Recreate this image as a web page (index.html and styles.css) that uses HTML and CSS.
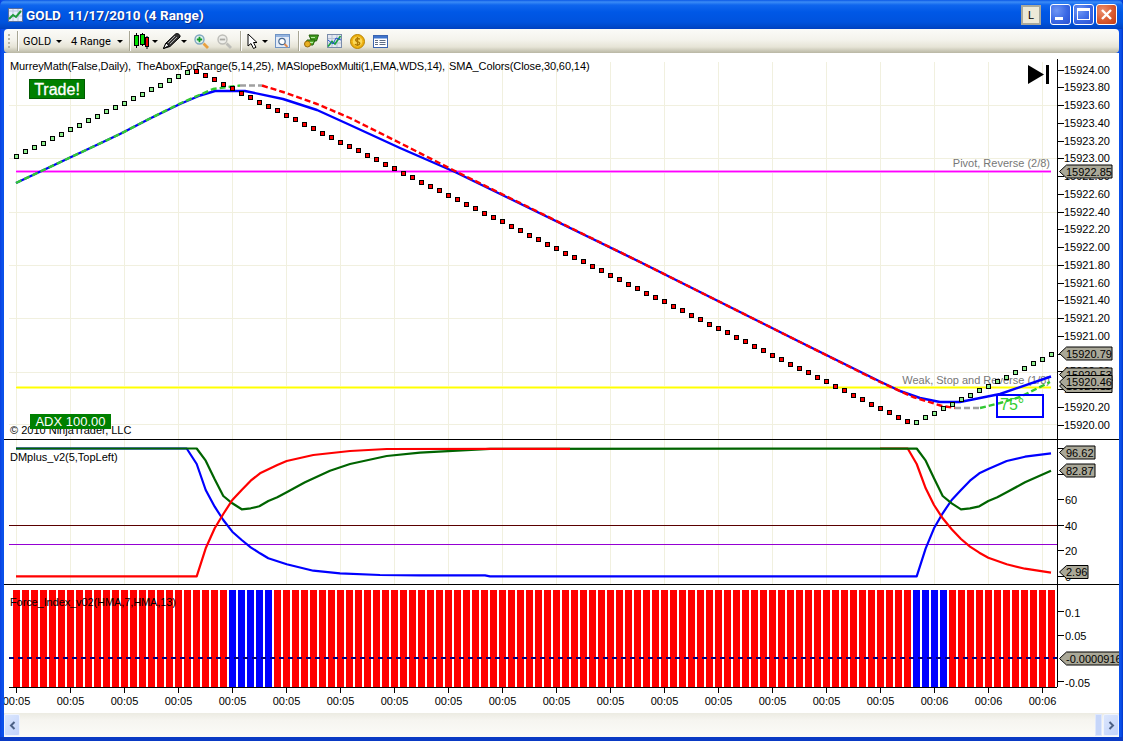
FILE: index.html
```html
<!DOCTYPE html>
<html lang="en">
<head>
<meta charset="utf-8">
<title>GOLD 11/17/2010 (4 Range)</title>
<link rel="stylesheet" href="styles.css">
</head>
<body>
<div class="window">
  <header class="titlebar">
    <svg class="app-icon" width="15" height="14" viewBox="0 0 15 14"><rect x=".5" y=".5" width="14" height="13" fill="#e8eefc" stroke="#5a6f9c"/><path d="M1 3h13M5 1v12M10 1v12M1 8h13" stroke="#b8c4dc"/><path d="M1 11l4-4 3 2 5-6" fill="none" stroke="#1f9a3c" stroke-width="2"/></svg>
    <span class="title">GOLD&nbsp; 11/17/2010 (4 Range)</span>
    <button class="lock">L</button>
    <div class="caption-buttons">
      <span class="cap cap-blue"><i class="glyph-min"></i></span>
      <span class="cap cap-blue"><i class="glyph-max"></i></span>
      <span class="cap cap-red"><svg width="13" height="13" viewBox="0 0 13 13"><path d="M2 2l9 9M11 2l-9 9" stroke="#fff" stroke-width="2.4"/></svg></span>
    </div>
  </header>
  <nav class="toolbar">
    <span class="grip"></span>
    <span class="sep"></span>
    <span class="tool-text t-gold">GOLD</span><i class="caret c-gold"></i>
    <span class="tool-text t-range">4 Range</span><i class="caret c-range"></i>
    <span class="sep s-a"></span>
    <svg class="ico i-candle" width="15" height="16" viewBox="0 0 15 16"><path d="M2.500 0v15M8.500 0v13M13 3v13" stroke="#000"/><rect x=".5" y="2.500" width="4" height="10" fill="#00e000" stroke="#000"/><rect x="6.500" y="1.500" width="4" height="10" fill="#00e000" stroke="#000"/><rect x="11.500" y="4.500" width="3" height="9" fill="#f00000" stroke="#000"/></svg><i class="caret c-candle"></i>
    <svg class="ico i-pencil" width="18" height="16" viewBox="0 0 18 16"><path d="M.5 15.500L3 10 12.500 1c2-1.200 5 .5 4.500 3L7 13.500z" fill="#333" stroke="#000"/><path d="M5 10l7-7M7 11l7-7" stroke="#aaa"/><path d="M.5 15.500L3 10l3 2.500z" fill="#fff" stroke="#000"/></svg><i class="caret c-pencil"></i>
    <svg class="ico i-zoom1" width="15" height="15" viewBox="0 0 15 15"><circle cx="5.500" cy="5.500" r="4.500" fill="#e4f2f0" stroke="#7fa6c0" stroke-width="1.400"/><path d="M9.500 9.500l4.500 4.500" stroke="#e8a040" stroke-width="2.800"/><path d="M2.800 5.500h5.400M5.500 2.800v5.400" stroke="#139a2a" stroke-width="1.800"/></svg>
    <svg class="ico i-zoom2" width="15" height="15" viewBox="0 0 15 15"><circle cx="5.500" cy="5.500" r="4.500" fill="#eeeeea" stroke="#bdbdb8" stroke-width="1.400"/><path d="M9.500 9.500l4.500 4.500" stroke="#bdbdb8" stroke-width="2.800"/><path d="M2.800 5.500h5.400" stroke="#a8a8a4" stroke-width="1.800"/></svg>
    <span class="sep s-b"></span>
    <svg class="ico i-cursor" width="11" height="16" viewBox="0 0 11 16"><path d="M1 1v12l3-2.500 2.500 5 2.500-1.200L6.500 9.500H10z" fill="#fff" stroke="#000"/></svg><i class="caret c-cursor"></i>
    <svg class="ico i-prop" width="15" height="14" viewBox="0 0 15 14"><rect x=".5" y=".5" width="14" height="13" fill="#e4ecf8" stroke="#6f93c4"/><rect x="1" y="1" width="13" height="2" fill="#94b4e0"/><circle cx="7" cy="7.500" r="3.200" fill="#fff" stroke="#4a6a92" stroke-width="1.200"/><path d="M9.500 10l3 3" stroke="#e08a50" stroke-width="2"/></svg>
    <span class="sep s-c"></span>
    <svg class="ico i-a" width="15" height="14" viewBox="0 0 15 14"><path d="M5 1h9.500l-2 6H7.500z" fill="#3f9a1e" stroke="#24600c"/><path d="M3 6h8l-2 5H2z" fill="#58b02e" stroke="#24600c"/><circle cx="3.500" cy="10" r="3" fill="#e8b020" stroke="#96680a"/><path d="M7 3.500h4M6 8.500h3" stroke="#b8e8a0"/></svg>
    <svg class="ico i-b" width="15" height="14" viewBox="0 0 15 14"><rect x=".5" y=".5" width="14" height="13" fill="#e4e8f0" stroke="#7a8cab"/><path d="M1 4.500h13M1 9h13M5 1v12M10 1v12" stroke="#b8c2d4"/><path d="M1 12.500l4-5 3 2.500 5.500-8" fill="none" stroke="#18a040" stroke-width="1.600"/><path d="M1 6l5 4 3-6 5 2" fill="none" stroke="#2050d0"/></svg>
    <svg class="ico i-c" width="15" height="15" viewBox="0 0 15 15"><circle cx="7.500" cy="7.500" r="7" fill="#eeb010" stroke="#b88400"/><circle cx="7.500" cy="7.500" r="4.800" fill="#fbd858"/><path d="M10 5.200C8 3.800 5 4.600 5.800 6.500s4.400 1 4 3-3 2.200-5 .8M7.500 3v9" fill="none" stroke="#b07a00" stroke-width="1.400"/></svg>
    <svg class="ico i-d" width="15" height="13" viewBox="0 0 15 13"><rect x=".5" y=".5" width="14" height="12" fill="#fff" stroke="#3a64b0"/><rect x="1" y="1" width="13" height="2.500" fill="#3f74cc"/><path d="M2 5.500h3M2 7.500h3M2 9.500h3M6.500 5.500h6M6.500 7.500h6M6.500 9.500h6" stroke="#5e6e86"/></svg>
  </nav>
  <main class="chart">
    <svg id="plot" class="plot" width="1115" height="660" viewBox="4 53 1115 660" xmlns="http://www.w3.org/2000/svg"></svg>
    <div class="chart-badge trade">Trade!</div>
    <div class="chart-badge adx">ADX 100.00</div>
  </main>
  <footer class="scrollbar">
    <span class="scroll-btn"><svg width="7" height="9" viewBox="0 0 7 9"><path d="M5.500 1L2 4.500 5.500 8" fill="none" stroke="#4d6185" stroke-width="2"/></svg></span>
    <span class="scroll-track"></span>
    <span class="scroll-thumb"></span>
    <span class="scroll-btn"><svg width="7" height="9" viewBox="0 0 7 9"><path d="M1.500 1L5 4.500 1.500 8" fill="none" stroke="#4d6185" stroke-width="2"/></svg></span>
  </footer>
</div>
<script src="script.js"></script>
</body>
</html>
```
FILE: styles.css
```css
* { box-sizing: border-box; }
html, body { margin: 0; padding: 0; background: #fff; }
body { font-family: "Liberation Sans", Arial, sans-serif; font-size: 11px; overflow: hidden; }
.window {
  width: 1123px; height: 741px; display: flex; flex-direction: column;
  padding: 0 4px 4px;
  background: linear-gradient(90deg, #0a3fe0 0, #0a50ea 2px, #0a50ea 1121px, #0035c8 100%);
  box-shadow: inset 0 -4px 0 #0a3ac4;
}
.titlebar {
  height: 29px; margin: 0 -4px; padding: 1px 6px 0 8px; display: flex; align-items: center; flex: none;
  background: linear-gradient(180deg, #0a58e6 0, #3b8cf6 2px, #0f66ee 5px, #0058e6 12px, #0053de 22px, #0048c8 27px, #0040c0 100%);
  border-radius: 6px 6px 0 0;
}
.app-icon { flex: none; }
.title { margin-left: 3px; color: #fff; font-family: Roboto, "Liberation Sans", sans-serif; font-size: 13.5px; font-weight: 700; letter-spacing: .08px; text-shadow: 1px 1px 0 #0a2f90; white-space: pre; flex: 1; }
.lock {
  width: 20px; height: 20px; padding: 0; margin-right: 9px; background: #ece9d8; border: 2px solid #a9a99c;
  font: 11px "Liberation Sans", Arial, sans-serif; color: #000;
}
.caption-buttons { display: flex; gap: 2px; margin-top: -2px; }
.cap { width: 21px; height: 21px; border: 1px solid #fff; border-radius: 3px; display: flex; align-items: center; justify-content: center; }
.cap-blue { background: radial-gradient(circle at 30% 30%, #6f96f4 0, #3a68e4 55%, #2a50d0 100%); }
.cap-red { background: radial-gradient(circle at 30% 30%, #ec9070 0, #d85a30 55%, #c23a12 100%); }
.glyph-min { width: 8px; height: 3px; background: #fff; margin-top: 9px; margin-right: 4px; }
.glyph-max { width: 13px; height: 12px; border: 1px solid #fff; border-top-width: 3px; }
.toolbar {
  height: 24px; flex: none; display: flex; align-items: center;
  background: linear-gradient(180deg, #fbfbf8 0, #f4f3ec 45%, #e6e4d6 75%, #b9b7a4 100%);
  border-radius: 4px;
  padding-left: 4px;
}
.grip { width: 2px; height: 15px; margin-right: 7px; background: repeating-linear-gradient(180deg, #b6b4a4 0 2px, transparent 2px 4px); }
.sep { width: 1px; height: 20px; background: #a8a694; box-shadow: 1px 0 0 #fff; flex: none; }
.tool-text { color: #000; font-family: Roboto, "Liberation Sans", sans-serif; font-size: 11px; flex: none; white-space: nowrap; }
.t-gold { margin-left: 5px; width: 27px; }
.t-range { margin-left: 9px; width: 40px; }
.caret { width: 0; height: 0; border: 3px solid transparent; border-top: 3px solid #000; border-bottom: 0; flex: none; margin-top: 1px; }
.c-gold { margin-left: 6px; }
.c-range { margin-left: 6px; }
.s-a { margin-left: 6px; }
.ico { flex: none; display: block; }
.i-candle { margin-left: 4px; }
.c-candle { margin-left: 3px; }
.i-pencil { margin-left: 5px; }
.c-pencil { margin-left: 0; }
.i-zoom1 { margin-left: 7px; }
.i-zoom2 { margin-left: 8px; }
.s-b { margin-left: 8px; }
.i-cursor { margin-left: 6px; }
.c-cursor { margin-left: 4px; }
.i-prop { margin-left: 7px; }
.s-c { margin-left: 8px; }
.i-a { margin-left: 5px; }
.i-b { margin-left: 8px; }
.i-c { margin-left: 8px; }
.i-d { margin-left: 8px; }
.chart { flex: 1; background: #fff; position: relative; overflow: hidden; min-height: 0; }
.plot { display: block; }
.plot text { font-family: "Liberation Sans", Arial, sans-serif; font-size: 11px; fill: #000; }
.plot text.legend { letter-spacing: -.1px; }
.plot text.note { fill: #777; }
.plot text.deg { fill: #32cd32; font-size: 16px; }
.chart-badge { position: absolute; background: #008000; color: #fff; text-align: center; }
.trade { left: 25px; top: 26px; width: 56px; height: 20px; font-size: 16px; line-height: 19px; border: 1px solid #005a00; -webkit-text-stroke: .3px #fff; }
.adx { left: 26px; top: 361px; width: 81px; height: 15px; font-size: 13px; line-height: 15px; }
.scrollbar {
  height: 24px; flex: none; display: flex; align-items: center;
  background: linear-gradient(180deg, #ecebe2 0, #f6f5f0 30%, #fbfbf8 100%);
}
.scroll-btn {
  width: 16px; height: 22px; flex: none; display: flex; align-items: center; justify-content: center;
  background: linear-gradient(135deg, #dbe6fd 0, #c2d3fb 100%); border: 1px solid #eef3fe; border-radius: 2px;
}
.scroll-track { flex: 1; }
.scroll-thumb { width: 7px; height: 22px; margin-right: 1px; background: #c6d6fa; border: 1px solid #dfe8fd; flex: none; }
```
FILE: script.js
```js
(function () {
  var svg = document.getElementById('plot');
  var NS = 'http://www.w3.org/2000/svg';
  function el(name, attrs, text) {
    var n = document.createElementNS(NS, name);
    for (var k in attrs) n.setAttribute(k, attrs[k]);
    if (text !== undefined) n.textContent = text;
    svg.appendChild(n);
    return n;
  }
  function line(x1, y1, x2, y2, color, extra) {
    var a = { x1: x1, y1: y1, x2: x2, y2: y2, stroke: color };
    for (var k in extra) a[k] = extra[k];
    return el('line', a);
  }
  function poly(pts, color, extra) {
    var a = { points: pts.map(function (p) { return p.join(','); }).join(' '), fill: 'none', stroke: color, 'stroke-width': 2.2, 'stroke-linejoin': 'round' };
    for (var k in extra) a[k] = extra[k];
    return el('polyline', a);
  }
  function text(x, y, s, cls, anchor) {
    var a = { x: x, y: y };
    if (cls) a['class'] = cls;
    if (anchor) a['text-anchor'] = anchor;
    return el('text', a, s);
  }
  function tag(y, s, right) {
    el('polygon', {
      points: [[1059.5, y], [1066.5, y - 6.5], [right, y - 6.5], [right, y + 6.5], [1066.5, y + 6.5]].map(function (p) { return p.join(','); }).join(' '),
      fill: '#aaa898', stroke: '#000'
    });
    text(1066, y + 4, s);
  }
  var crisp = { 'shape-rendering': 'crispEdges' };
  var GRID = '#f1f0df';

  // grid
  var i, x, y;
  for (i = 0; i < 20; i++) {
    x = 16.5 + 54 * i;
    line(x, 62, x, 439, GRID, crisp);
    line(x, 440, x, 584, GRID, crisp);
  }
  [105.5, 158.5, 212.5, 265.5, 318.5, 372.5, 424.5].forEach(function (v) { line(9, v, 1057, v, GRID, crisp); });

  // pivot lines
  line(16, 171.5, 1051, 171.5, '#ff90ff', { 'stroke-width': 3, 'shape-rendering': 'crispEdges' });
  line(16, 171.5, 1051, 171.5, '#ff00ff', crisp);
  line(16, 387.5, 1051, 387.5, '#ffff80', { 'stroke-width': 3, 'shape-rendering': 'crispEdges' });
  line(16, 387.5, 1051, 387.5, '#ffff00', crisp);
  text(1050, 167, 'Pivot, Reverse (2/8)', 'note', 'end');
  text(1050, 384, 'Weak, Stop and Reverse (1/8)', 'note', 'end');

  // price lines
  var common = [[16, 183], [120, 134], [150, 118.5]];
  var blue = common.concat([[180, 104], [200, 95.5], [215, 91], [245, 91], [283, 99], [317, 110], [350, 125], [400, 148], [455, 172], [640, 262], [700, 292], [800, 342], [880, 381.5], [900, 391], [920, 398], [940, 402], [960, 402], [1000, 394], [1051, 376.5]]);
  var smaG = common.concat([[180, 103.5], [213, 89], [240, 85.5]]);
  var smaGrey = [[240, 85.5], [262, 85.5]];
  var smaR = [[262, 85.5], [283, 92], [317, 104], [350, 118], [400, 143], [455, 171], [640, 262], [700, 292], [800, 342], [880, 382], [913, 397], [942, 406], [955, 408]];
  var smaGrey2 = [[955, 408], [980, 408]];
  var smaG2 = [[980, 408], [1000, 403], [1020, 397], [1050, 382]];
  poly(blue, '#0000ff', { 'stroke-width': 2.4 });
  var dash = { 'stroke-dasharray': '6 3', 'stroke-width': 2.4 };
  poly(smaG, '#32c832', dash);
  poly(smaGrey, '#a0a0a0', dash);
  poly(smaR, '#ff0000', dash);
  poly(smaGrey2, '#a0a0a0', dash);
  poly(smaG2, '#32c832', dash);

  // range dots
  for (i = 0; i < 116; i++) {
    x = 16 + 9 * i;
    var up = x <= 187 || x >= 916;
    if (x <= 187) y = 72 + (187 - x) / 9 * 4.44;
    else if (x <= 907) y = 71 + (x - 196) / 9 * 4.44;
    else y = 422.5 - (x - 916) / 9 * 4.53;
    var s = 5;
    el('rect', {
      x: Math.round(x - s / 2) + 0.5, y: Math.round(y - s / 2) + 0.5, width: s - 1, height: s - 1,
      fill: up ? '#90ee90' : '#ff0000', stroke: '#000', 'shape-rendering': 'crispEdges'
    });
  }

  // 75 degree box
  el('rect', { x: 997, y: 395, width: 46, height: 22, fill: 'none', stroke: '#0000ff', 'stroke-width': 2 });
  text(1000, 410, '75°', 'deg');

  // play-to-end icon
  el('polygon', { points: '1028,65 1028,84 1044,74.5', fill: '#000' });
  el('rect', { x: 1046, y: 65, width: 3, height: 19, fill: '#000' });

  // legends
  text(10, 70, 'MurreyMath(False,Daily),', 'legend');
  text(136.5, 70, 'TheAboxForRange(5,14,25),', 'legend');
  text(277, 70, 'MASlopeBoxMulti(1,EMA,WDS,14),', 'legend').setAttribute('textLength', '168');
  text(449, 70, 'SMA_Colors(Close,30,60,14)', 'legend');
  text(10, 434, '© 2010 NinjaTrader, LLC');
  text(10, 461, 'DMplus_v2(5,TopLeft)');

  // frame lines
  line(4, 439.5, 1119, 439.5, '#000', crisp);
  line(4, 584.5, 1119, 584.5, '#000', crisp);
  line(1057.5, 59, 1057.5, 687, '#000', crisp);

  // price axis
  var v;
  for (i = 0; i <= 20; i++) {
    v = 15924 - i * 0.2;
    y = Math.round(69.6 + i * 17.75) + 0.5;
    line(1058, y, 1064, y, '#000', crisp);
    text(1064, y + 3.5, v.toFixed(2));
  }
  tag(171.5, '15922.85', 1112);
  tag(374.5, '15920.53', 1112);
  tag(386, '15920.11', 1112);
  tag(353.5, '15920.79', 1112);
  tag(382, '15920.46', 1112);

  // DMplus pane
  line(9, 525.5, 1057, 525.5, '#5a0000', crisp);
  line(9, 544.5, 1057, 544.5, '#9400d3', crisp);
  [[448.5], [474.5], [499.5, '60'], [525.5, '40'], [550.5, '20'], [576.5, '0']].forEach(function (a) {
    line(1058, a[0], 1064, a[0], '#000', crisp);
    if (a[1]) text(1065, a[0] + 4, a[1]);
  });
  poly([[16, 448.5], [186.7, 448.5], [196.7, 464], [205.7, 490], [214.7, 506.7], [223.3, 520], [232.3, 531.7], [241.7, 540], [250.7, 547.3], [260, 553.3], [268.3, 558.3], [286.7, 564.3], [313.3, 570.7], [340, 573.3], [380, 575], [420, 575.3], [485, 575.3], [490, 576.3], [916.7, 576.3], [925.7, 548.3], [934, 528.3], [942.7, 513.3], [951.7, 500], [961, 490], [970, 480.7], [979.3, 473.3], [988.3, 469], [1006.7, 461], [1025, 456.7], [1051, 453.3]], '#0000ff');
  poly([[880, 448.5], [907.7, 448.5], [916.7, 464], [925.7, 488.3], [934, 505], [942.7, 518.3], [951.7, 529.3], [961, 539], [970, 546.7], [979.3, 552.7], [988.3, 557.7], [1006.7, 564.3], [1025, 568.7], [1051, 572.7]], '#ff0000');
  poly([[16, 448.5], [196.7, 448.5], [205.7, 460.7], [214.7, 479.3], [223.3, 496], [232.3, 503.3], [241.7, 509.3], [250.7, 508.3], [259.3, 506.3], [268.3, 501], [277.3, 497.3], [286.7, 492.3], [305, 482.3], [330, 470.7], [350, 464], [386.7, 456], [420, 452.7], [490, 448.8], [916.7, 448.5], [925.7, 460.7], [934, 478.3], [942.7, 496], [951.7, 503.3], [961, 509.3], [970, 508.3], [979.3, 506.3], [988.3, 501], [997.3, 497.3], [1006.7, 492.3], [1025, 482.3], [1051, 470.7]], '#006400');
  poly([[16, 576.3], [196.7, 576.3], [205.7, 548.3], [214.7, 528.3], [223.3, 514], [232.3, 500], [241.7, 490], [250.7, 480.7], [260, 473.3], [277.3, 465], [286.7, 461], [313.3, 455], [350, 451], [386.7, 449], [570, 448.8]], '#ff0000');
  tag(452.5, '96.62', 1095);
  tag(470.5, '82.87', 1095);
  tag(572, '2.96', 1088);

  // Force index pane
  for (i = 0; i < 116; i++) {
    var isBlue = (i >= 24 && i <= 28) || (i >= 100 && i <= 103);
    el('rect', { x: 13 + 9 * i, y: 590, width: 7, height: 97, fill: isBlue ? '#0000ff' : '#ff0000', 'shape-rendering': 'crispEdges' });
  }
  line(9, 658, 1057, 658, '#000080', { 'stroke-width': 2, 'stroke-dasharray': '5 4', 'shape-rendering': 'crispEdges' });
  text(10, 606, 'Force_Index_v02(HMA,7,HMA,13)', 'legend');
  line(9, 687.5, 1057, 687.5, '#000', crisp);
  [[611.5, 617, '0.1'], [635.5, 640, '0.05'], [681.5, 687, '-0.05']].forEach(function (a) {
    line(1058, a[0], 1064, a[0], '#000', crisp);
    text(1065, a[1], a[2]);
  });
  tag(658.5, '-0.0000916', 1125);

  // time axis
  for (i = 0; i < 20; i++) {
    x = 16.5 + 54 * i;
    line(x, 688, x, 693, '#000', crisp);
    text(x, 704.5, i >= 17 ? '00:06' : '00:05', null, 'middle');
  }
})();
```
